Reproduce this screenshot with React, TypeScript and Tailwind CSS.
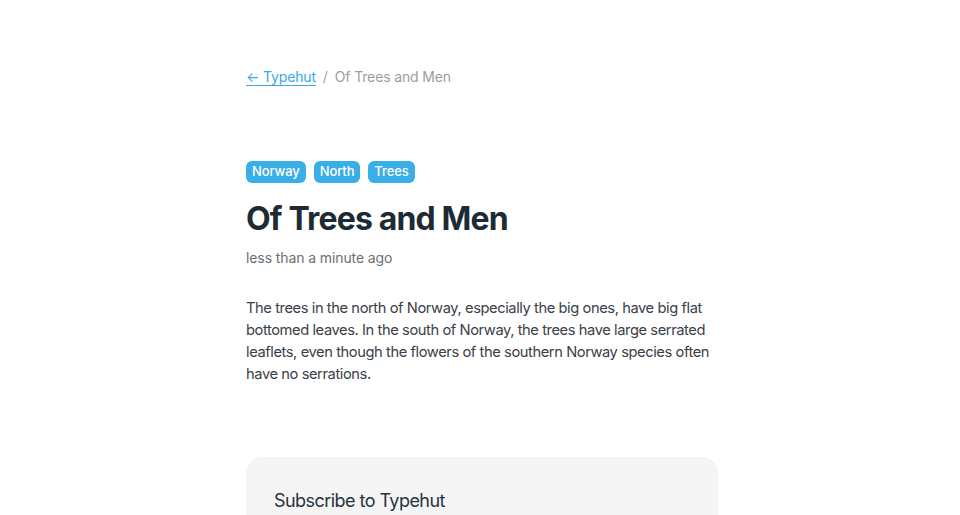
import React from "react";

const tags = ["Norway", "North", "Trees"];

export default function App() {
  return (
    <div
      className="min-h-screen bg-white"
      style={{ fontFamily: "Inter, 'Noto Sans', sans-serif" }}
    >
      <div className="mx-auto w-[476px] pl-[4px] pt-[67px]">
        <nav className="flex items-center gap-[7px] text-[14px] leading-[20px] tracking-[-0.15px]">
          <a href="#" className="text-[#38a9e4] underline underline-offset-[3px] decoration-[1px]">
            ← Typehut
          </a>
          <span className="text-[#a0a4a8]">/</span>
          <span className="text-[#9a9ea3]">Of Trees and Men</span>
        </nav>

        <div className="mt-[74px] flex gap-[8px]">
          {tags.map((t) => (
            <span
              key={t}
              className="rounded-[6px] bg-[#3aaee6] px-[6px] h-[22px] flex items-center text-[13px] font-medium tracking-[-0.1px] text-white"
            >
              {t}
            </span>
          ))}
        </div>

        <h1 className="mt-[16px] text-[32px] leading-[40px] font-bold tracking-[-0.85px] text-[#1d2b35]">
          Of Trees and Men
        </h1>
        <p className="mt-[9px] text-[14px] leading-[20px] tracking-[-0.1px] text-[#6b7075]">
          less than a minute ago
        </p>

        <p className="mt-[29px] text-[14.7px] leading-[22px] tracking-[-0.42px] text-[#3a4148]">
          The trees in the north of Norway, especially the big ones, have big flat bottomed leaves. In the
          south of Norway, the trees have large serrated leaflets, even though the flowers of the southern
          Norway species often have no serrations.
        </p>

        <div className="mt-[72px] rounded-[16px] bg-[#f5f5f5] px-[28px] pt-[32px] pb-[40px]">
          <h2 className="text-[18px] leading-[24px] tracking-[-0.55px] text-[#27343d]">Subscribe to Typehut</h2>
        </div>
      </div>
    </div>
  );
}
